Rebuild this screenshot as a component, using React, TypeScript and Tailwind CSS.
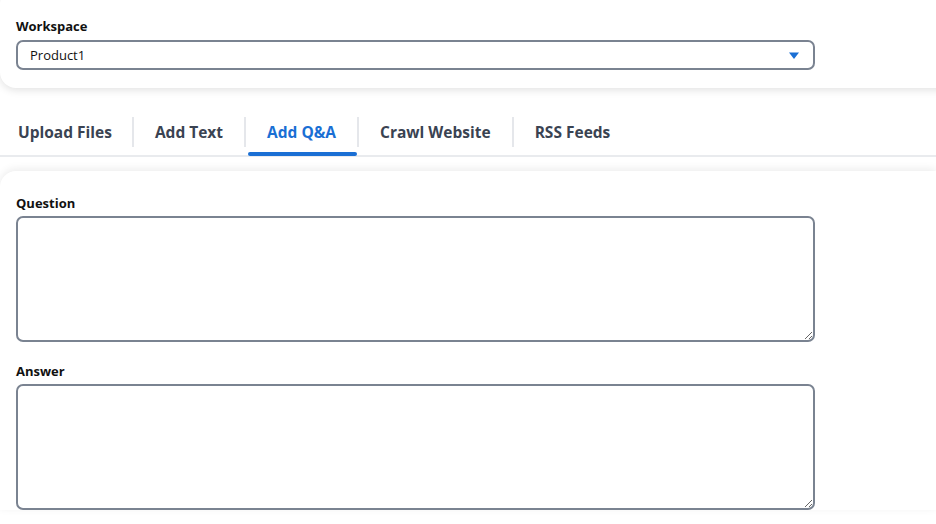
import { useState } from "react";

const tabs = ["Upload Files", "Add Text", "Add Q&A", "Crawl Website", "RSS Feeds"];

export default function App() {
  const [active, setActive] = useState(2);
  const [question, setQuestion] = useState("");
  const [answer, setAnswer] = useState("");

  return (
    <div
      className="min-h-[524px] w-[936px] overflow-hidden bg-white"
      style={{ fontFamily: '"Open Sans", "Noto Sans", sans-serif' }}
    >
      <div className="-mt-3 rounded-b-2xl rounded-t-2xl bg-white px-4 pb-[18px] pt-[29px] shadow-[0_2px_8px_rgba(0,0,0,0.12)] w-[960px]">
        <label className="block text-[13px] font-bold leading-[18px] text-[#111]">Workspace</label>
        <div className="mt-[5px] flex h-[30px] w-[799px] items-center justify-between rounded-[7px] border-2 border-[#7a8391] bg-white pl-3 pr-[13px]">
          <span className="pt-[1px] text-[13px] text-[#111]">Product1</span>
          <svg width="12" height="9" viewBox="0 0 12 9">
            <path d="M1 1.5 L11 1.5 L6 8 Z" fill="#1a6fd4" />
          </svg>
        </div>
      </div>

      <div className="mt-[21px] flex h-[48px] items-stretch border-b-2 border-[#e9ebee]">
        {tabs.map((t, i) => (
          <div key={t} className="flex items-stretch">
            {i > 0 && <div className="my-[8px] w-[2px] bg-[#e5e7eb]" />}
            <button
              onClick={() => setActive(i)}
              className={`relative flex items-center pt-[1px] text-[15.5px] font-bold ${
                i === 0 ? "pl-[18px] pr-[20px]" : "px-[21px]"
              } ${i === active ? "text-[#1a6fd4]" : "text-[#3a4352]"}`}
            >
              {t}
              {i === active && (
                <span className="absolute bottom-[-1px] left-[2px] right-[0px] h-[4px] rounded-full bg-[#1a6fd4]" />
              )}
            </button>
          </div>
        ))}
      </div>

      <div className="mt-[14px] rounded-tl-2xl bg-white px-4 pt-[23px] shadow-[0_-2px_8px_rgba(0,0,0,0.08)]">
        <label className="block text-[13px] font-bold leading-[18px] text-[#111]">Question</label>
        <textarea
          value={question}
          onChange={(e) => setQuestion(e.target.value)}
          className="mt-[4px] block h-[126px] w-[799px] rounded-[7px] border-2 border-[#7a8391] bg-white p-2 text-[13px] outline-none"
        />
        <label className="mt-[20px] block text-[13px] font-bold leading-[18px] text-[#111]">Answer</label>
        <textarea
          value={answer}
          onChange={(e) => setAnswer(e.target.value)}
          className="mt-[4px] block h-[126px] w-[799px] rounded-[7px] border-2 border-[#7a8391] bg-white p-2 text-[13px] outline-none"
        />
      </div>
    </div>
  );
}
